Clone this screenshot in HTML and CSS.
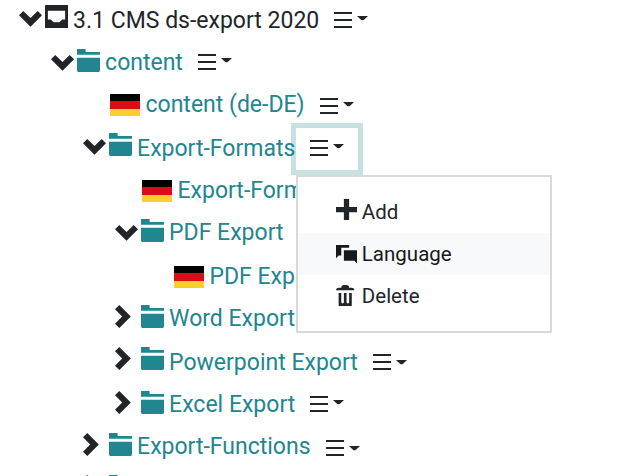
FILE: index.html
```
<!DOCTYPE html>
<html lang="en">
<head>
    <meta charset="UTF-8">
    <meta name="viewport" content="width=device-width, initial-scale=1.0">
    <title>CMS ds-export</title>
    <link rel="stylesheet" href="styles.css">
</head>
<body>
    <!-- Shared icons -->
    <svg class="sprite" width="0" height="0">
        <symbol id="chevron-bottom" viewBox="0 0 8 8"><path transform="translate(0 1)" d="M1.5 0l-1.5 1.5 4 4 4-4-1.5-1.5-2.5 2.5-2.5-2.5z"/></symbol>
        <symbol id="chevron-right" viewBox="0 0 8 8"><path d="M1.5 0l-1.5 1.5 2.5 2.5-2.5 2.5 1.5 1.5 4-4-4-4z"/></symbol>
        <symbol id="inbox" viewBox="0 0 8 8"><path d="M.19 0c-.11 0-.19.08-.19.19v7.63c0 .11.08.19.19.19h7.63c.11 0 .19-.08.19-.19v-7.63c0-.11-.08-.19-.19-.19h-7.63zm.81 2h6v3h-1l-1 1h-2l-1-1h-1v-3z"/></symbol>
        <symbol id="folder" viewBox="0 0 8 8"><path d="M0 0v2h8v-1h-5v-1h-3zm0 3v4.5c0 .28.22.5.5.5h7c.28 0 .5-.22.5-.5v-4.5h-8z"/></symbol>
        <symbol id="plus" viewBox="0 0 8 8"><path d="M3 0v3h-3v2h3v3h2v-3h3v-2h-3v-3h-2z"/></symbol>
        <symbol id="chat" viewBox="0 0 8 8"><path d="M0 0v5l1-1h1v-3h3v-1h-5zm3 2v4h4l1 1v-5h-5z"/></symbol>
        <symbol id="trash" viewBox="0 0 8 8"><path d="M3 0c-.55 0-1 .45-1 1h-1c-.55 0-1 .45-1 1h7c0-.55-.45-1-1-1h-1c0-.55-.45-1-1-1h-1zm-2 3v4.81c0 .11.08.19.19.19h4.63c.11 0 .19-.08.19-.19v-4.81h-1v3.5c0 .28-.22.5-.5.5s-.5-.22-.5-.5v-3.5h-1v3.5c0 .28-.22.5-.5.5s-.5-.22-.5-.5v-3.5h-1z"/></symbol>
        <symbol id="menu" viewBox="0 0 18 16"><path d="M0 0h18v2H0zM0 7h18v2H0zM0 14h18v2H0z"/></symbol>
        <symbol id="caret" viewBox="0 0 11 5"><path d="M0 0h11L7 3.700q-1.500 1.200-3 0z"/></symbol>
    </svg>

    <div class="tree">
        <div class="row level-0 root">
            <svg class="toggle open"><use href="#chevron-bottom"/></svg>
            <svg class="icon"><use href="#inbox"/></svg>
            <span class="label">3.1 CMS ds-export 2020</span>
            <span class="actions"><svg class="menu"><use href="#menu"/></svg><svg class="caret"><use href="#caret"/></svg></span>
        </div>
        <div class="row level-1">
            <svg class="toggle open"><use href="#chevron-bottom"/></svg>
            <svg class="icon"><use href="#folder"/></svg>
            <a class="label">content</a>
            <span class="actions"><svg class="menu"><use href="#menu"/></svg><svg class="caret"><use href="#caret"/></svg></span>
        </div>
        <div class="row level-2 language tall low">
            <span class="flag"></span>
            <a class="label">content (de-DE)</a>
            <span class="actions"><svg class="menu"><use href="#menu"/></svg><svg class="caret"><use href="#caret"/></svg></span>
        </div>
        <div class="row level-2 raised">
            <svg class="toggle open"><use href="#chevron-bottom"/></svg>
            <svg class="icon"><use href="#folder"/></svg>
            <a class="label">Export-Formats</a>
            <div class="actions focused">
                <svg class="menu"><use href="#menu"/></svg><svg class="caret"><use href="#caret"/></svg>
                <div class="dropdown">
                    <a class="item"><svg class="item-icon"><use href="#plus"/></svg>Add</a>
                    <a class="item active"><svg class="item-icon"><use href="#chat"/></svg>Language</a>
                    <a class="item"><svg class="item-icon"><use href="#trash"/></svg>Delete</a>
                </div>
            </div>
        </div>
        <div class="row level-3 language">
            <span class="flag"></span>
            <a class="label">Export-Formats</a>
        </div>
        <div class="row level-3 tall">
            <svg class="toggle open"><use href="#chevron-bottom"/></svg>
            <svg class="icon"><use href="#folder"/></svg>
            <a class="label">PDF Export</a>
        </div>
        <div class="row level-4 language">
            <span class="flag"></span>
            <a class="label">PDF Export</a>
        </div>
        <div class="row level-3 tall">
            <svg class="toggle"><use href="#chevron-right"/></svg>
            <svg class="icon"><use href="#folder"/></svg>
            <a class="label">Word Export</a>
        </div>
        <div class="row level-3 raised">
            <svg class="toggle"><use href="#chevron-right"/></svg>
            <svg class="icon"><use href="#folder"/></svg>
            <a class="label">Powerpoint Export</a>
            <span class="actions"><svg class="menu"><use href="#menu"/></svg><svg class="caret caret-low"><use href="#caret"/></svg></span>
        </div>
        <div class="row level-3">
            <svg class="toggle"><use href="#chevron-right"/></svg>
            <svg class="icon"><use href="#folder"/></svg>
            <a class="label">Excel Export</a>
            <span class="actions"><svg class="menu"><use href="#menu"/></svg><svg class="caret"><use href="#caret"/></svg></span>
        </div>
        <div class="row level-2 low">
            <svg class="toggle"><use href="#chevron-right"/></svg>
            <svg class="icon"><use href="#folder"/></svg>
            <a class="label">Export-Functions</a>
            <span class="actions"><svg class="menu"><use href="#menu"/></svg><svg class="caret caret-low"><use href="#caret"/></svg></span>
        </div>
        <div class="row level-2 cut">
            <svg class="toggle"><use href="#chevron-right"/></svg>
            <svg class="icon"><use href="#folder"/></svg>
        </div>
    </div>
</body>
</html>
```
FILE: styles.css
```
body {
    margin: 0;
    background: #fff;
    color: #212529;
    font-family: Roboto, "Liberation Sans", sans-serif;
    font-size: 23px;
}

svg {
    display: block;
    flex: none;
    fill: currentColor;
}

.sprite {
    position: absolute;
}

.tree {
    height: 476px;
    overflow: hidden;
}

/* Tree rows */
.row {
    display: flex;
    align-items: flex-start;
    height: 42px;
    white-space: nowrap;
}

.tall {
    height: 44px;
}

.cut {
    height: 8px;
    overflow: hidden;
}

.level-0 {
    padding-left: 19px;
}

.level-1 {
    padding-left: 51px;
}

.level-2 {
    padding-left: 83px;
}

.level-3 {
    padding-left: 115px;
}

.level-4 {
    padding-left: 147px;
}

.toggle {
    width: 23px;
    height: 23px;
    margin: 7px 2.6px 0 0;
}

.toggle.open {
    margin-top: 10px;
}

.icon {
    width: 23px;
    height: 23px;
    margin-top: 7px;
    color: #218690;
}

.root .icon {
    margin-top: 5px;
    color: #212529;
}

.root .toggle {
    margin-top: 8px;
}

.raised .toggle,
.raised .icon {
    margin-top: 5px;
}

.raised .toggle.open {
    margin-top: 8px;
}

.label {
    position: relative;
    z-index: 1;
    margin-left: 5.5px;
    line-height: 42px;
    color: #218690;
}

.root .label {
    color: #212529;
}

.flag {
    width: 30px;
    height: 22px;
    margin: 10px 0 0 27px;
    background: linear-gradient(#000 0 33.3%, #dd0b15 33.3% 66.6%, #ffce2e 66.6%);
}

/* Row menu button */
.actions {
    display: flex;
    align-items: flex-start;
    margin: 12px 0 0 15px;
    color: #212529;
}

.low .actions {
    margin-top: 14px;
}

.menu {
    width: 18px;
    height: 16px;
}

.caret {
    width: 11px;
    height: 5px;
    margin: 4px 0 0 5px;
}

.caret-low {
    margin-top: 6px;
}

.focused {
    position: relative;
    box-sizing: border-box;
    width: 72px;
    height: 52px;
    margin: -5px 0 0 -4px;
    padding: 12px 0 0 14px;
    border: 5px solid #c7e0e1;
}

.dropdown {
    position: absolute;
    top: 47px;
    left: 0;
    z-index: 2;
    box-sizing: border-box;
    width: 256px;
    height: 158px;
    padding: 14px 0;
    border: 2px solid #d9d9d9;
    background: #fff;
    font-size: 20.5px;
}

.item {
    display: flex;
    height: 42px;
    padding-left: 38px;
    line-height: 42px;
}

.active {
    background: #f8f9fa;
    color: #16181b;
}

.item-icon {
    width: 21px;
    height: 21px;
    margin: 8px 4.5px 0 0;
}

.active .item-icon {
    margin-top: 12px;
}

.item:last-child .item-icon {
    margin-top: 10px;
}
```
